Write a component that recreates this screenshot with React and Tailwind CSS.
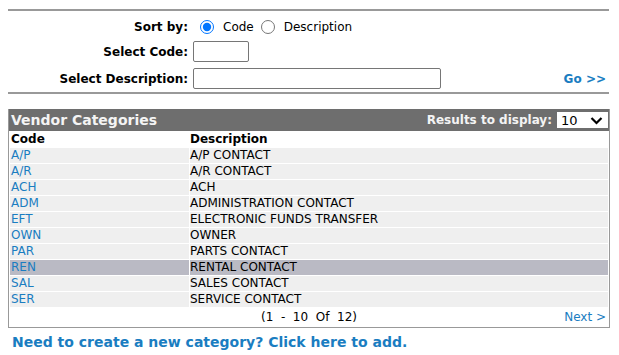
import React, { useState } from 'react';

const categories = [
  { code: 'A/P', desc: 'A/P CONTACT' },
  { code: 'A/R', desc: 'A/R CONTACT' },
  { code: 'ACH', desc: 'ACH' },
  { code: 'ADM', desc: 'ADMINISTRATION CONTACT' },
  { code: 'EFT', desc: 'ELECTRONIC FUNDS TRANSFER' },
  { code: 'OWN', desc: 'OWNER' },
  { code: 'PAR', desc: 'PARTS CONTACT' },
  { code: 'REN', desc: 'RENTAL CONTACT' },
  { code: 'SAL', desc: 'SALES CONTACT' },
  { code: 'SER', desc: 'SERVICE CONTACT' },
];

const App = () => {
  const [sortBy, setSortBy] = useState('code');
  const [selected, setSelected] = useState('REN');

  return (
    <div className="font-['DejaVu_Sans',sans-serif] text-[12px] text-black bg-white min-h-[355px]">
      <div className="ml-2 w-[601px] pt-[9px]">
        <div className="h-[2px] bg-[#999]" />

        <div className="flex items-center h-[28px] mt-[2px]">
          <span className="w-[180px] text-right font-bold">Sort by:</span>
          <label className="flex items-center ml-[12px]">
            <input
              type="radio"
              checked={sortBy === 'code'}
              onChange={() => setSortBy('code')}
              className="w-[14px] h-[14px] m-0 accent-[#0075ff]"
            />
            <span className="ml-[9px]">Code</span>
          </label>
          <label className="flex items-center ml-[7px]">
            <input
              type="radio"
              checked={sortBy === 'desc'}
              onChange={() => setSortBy('desc')}
              className="w-[14px] h-[14px] m-0"
            />
            <span className="ml-[9px]">Description</span>
          </label>
        </div>

        <div className="flex items-center">
          <span className="w-[180px] text-right font-bold">Select Code:</span>
          <input className="ml-[5px] w-[56px] h-[21px] border border-[#767676] rounded-[2px]" />
        </div>

        <div className="flex items-center mt-[6px]">
          <span className="w-[180px] text-right font-bold">Select Description:</span>
          <input className="ml-[5px] w-[248px] h-[21px] border border-[#767676] rounded-[2px]" />
          <a href="#" className="ml-auto mr-[3px] font-bold text-[#1a7dc1]">Go &gt;&gt;</a>
        </div>

        <div className="h-[2px] bg-[#999] mt-[3px]" />

        <div className="mt-[15px] w-[602px] border border-[#999] border-t-0">
          <div className="h-[22px] bg-[#6e6e6e] flex items-center pl-[2px] pr-[1px] text-[#f4f4f4] font-bold">
            <span className="text-[14px]">Vendor Categories</span>
            <span className="ml-auto text-[12px]">Results to display:</span>
            <div className="relative ml-[5px] w-[51px] h-[16px] bg-white text-black">
              <select className="appearance-none w-full h-full pl-[4px] font-normal text-[13px] leading-[16px] bg-transparent outline-none">
                <option>10</option>
                <option>25</option>
                <option>50</option>
              </select>
              <svg className="absolute right-[5px] top-[4px] pointer-events-none" width="13" height="9" viewBox="0 0 13 9">
                <path d="M1.5 2 L6.5 7 L11.5 2" fill="none" stroke="#000" strokeWidth="2.2" />
              </svg>
            </div>
          </div>

          <table className="w-full border-separate border-spacing-[1px] leading-[15px]">
            <thead>
              <tr>
                <th className="w-[179px] h-[15px] p-0 pl-[1px] text-left font-bold">Code</th>
                <th className="h-[15px] p-0 text-left font-bold">Description</th>
              </tr>
            </thead>
            <tbody>
              {categories.map((c) => (
                <tr
                  key={c.code}
                  onClick={() => setSelected(c.code)}
                  className={c.code === selected ? 'bg-[#babac4]' : 'bg-[#efefef]'}
                >
                  <td className="h-[15px] p-0 pl-[1px]">
                    <a href="#" className="text-[#1a7dc1]">{c.code}</a>
                  </td>
                  <td className="h-[15px] p-0">{c.desc}</td>
                </tr>
              ))}
            </tbody>
          </table>

          <div className="relative h-[20px] flex items-center justify-center -mt-[1px]">
            <span className="whitespace-pre">(1  -  10  Of  12)</span>
            <a href="#" className="absolute right-[3px] text-[#1a7dc1]">Next &gt;</a>
          </div>
        </div>

        <a href="#" className="block mt-[5px] ml-[4px] font-bold text-[14px] leading-[18px] text-[#1a7dc1]">
          Need to create a new category? Click here to add.
        </a>
      </div>
    </div>
  );
};

export default App;
